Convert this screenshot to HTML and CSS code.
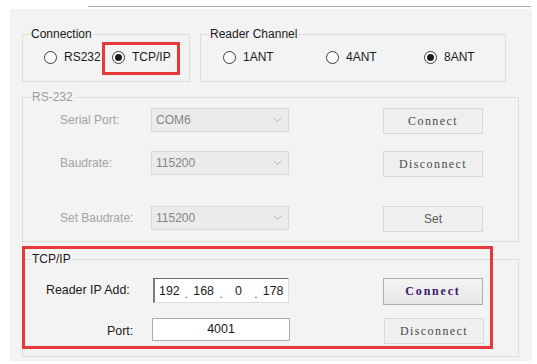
FILE: index.html
```html
<!DOCTYPE html>
<html>
<head>
<meta charset="utf-8">
<link rel="stylesheet" href="styles.css">
</head>
<body>
<div class="topline"></div>
<div class="panel">
  <div class="row1">
    <fieldset class="grp conn">
      <legend>Connection</legend>
      <div class="radios">
        <label class="opt w-rs"><span class="radio"></span>RS232</label>
        <label class="opt"><span class="radio on"></span>TCP/IP</label>
      </div>
    </fieldset>
    <fieldset class="grp chan">
      <legend>Reader Channel</legend>
      <div class="radios">
        <label class="opt w-1"><span class="radio"></span>1ANT</label>
        <label class="opt w-4"><span class="radio"></span>4ANT</label>
        <label class="opt"><span class="radio on"></span>8ANT</label>
      </div>
    </fieldset>
  </div>

  <fieldset class="grp rs disabled">
    <legend>RS-232</legend>
    <div class="frow r1">
      <span class="flabel">Serial Port:</span>
      <div class="combo"><span>COM6</span><svg width="9" height="6" viewBox="0 0 9 6"><path d="M1 1 L4.5 4.5 L8 1" fill="none" stroke="#b4b4b4" stroke-width="1"/></svg></div>
      <button class="btn dis">Connect</button>
    </div>
    <div class="frow r2">
      <span class="flabel">Baudrate:</span>
      <div class="combo"><span>115200</span><svg width="9" height="6" viewBox="0 0 9 6"><path d="M1 1 L4.5 4.5 L8 1" fill="none" stroke="#b4b4b4" stroke-width="1"/></svg></div>
      <button class="btn dis">Disconnect</button>
    </div>
    <div class="frow r3">
      <span class="flabel">Set Baudrate:</span>
      <div class="combo"><span>115200</span><svg width="9" height="6" viewBox="0 0 9 6"><path d="M1 1 L4.5 4.5 L8 1" fill="none" stroke="#b4b4b4" stroke-width="1"/></svg></div>
      <button class="btn dis sans">Set</button>
    </div>
  </fieldset>

  <fieldset class="grp tcp">
    <legend>TCP/IP</legend>
    <div class="frow t1">
      <span class="tlabel ip-l">Reader IP Add:</span>
      <div class="ipbox">
        <span class="oct">192</span><span class="dot">.</span>
        <span class="oct">168</span><span class="dot">.</span>
        <span class="oct">0</span><span class="dot">.</span>
        <span class="oct">178</span>
      </div>
      <button class="btn bold">Connect</button>
    </div>
    <div class="frow t2">
      <span class="tlabel port-l">Port:</span>
      <div class="portbox">4001</div>
      <button class="btn dis">Disconnect</button>
    </div>
  </fieldset>

  <div class="mark mark-tcp"></div>
  <div class="mark mark-grp"></div>
</div>
</body>
</html>
```

FILE: styles.css
```css
* { box-sizing: border-box; }
html, body { margin: 0; padding: 0; background: #ffffff; }
body {
  font-family: "Liberation Sans", Arial, sans-serif;
  font-size: 12px;
  color: #1a1a1a;
  width: 537px;
  height: 364px;
  overflow: hidden;
}
.topline {
  margin: 6px 0 0 88px;
  width: 443px;
  height: 1px;
  background: #a9a9a9;
}
.panel {
  position: relative;
  margin: 2px 0 0 10px;
  width: 522px;
  height: 352px;
  background: #f3f3f3;
  padding: 18px 0 0 12px;
}
.row1 { display: flex; gap: 10px; }
.grp {
  margin: 0;
  padding: 0;
  border: 1px solid #dcdcdc;
  min-width: 0;
}
.grp legend {
  margin-left: 8px;
  padding: 0 1px;
  line-height: 14px;
  font-size: 12px;
}
.conn legend { margin-left: 7px; }
.conn { width: 168px; height: 55px; }
.chan { width: 306px; height: 55px; }
.radios {
  display: flex;
  align-items: center;
  height: 14px;
  margin-top: 9px;
}
.conn .radios { padding-left: 21px; }
.chan .radios { padding-left: 22px; }
.opt { display: flex; align-items: center; line-height: 14px; }
.w-rs { width: 68px; }
.w-1 { width: 103px; }
.w-4 { width: 98px; }
.radio {
  width: 13px;
  height: 13px;
  border: 1px solid #3a3a3a;
  border-radius: 50%;
  background: #fff;
  margin-right: 7px;
  display: flex;
  align-items: center;
  justify-content: center;
}
.radio.on::after {
  content: "";
  width: 7px;
  height: 7px;
  border-radius: 50%;
  background: #1e1e1e;
}

.rs { width: 497px; height: 152px; margin-top: 8px; }
.rs legend { color: #9c9c9c; }
.frow { display: flex; align-items: flex-start; }
.r1 { margin-top: 4px; }
.r2 { margin-top: 17px; }
.r3 { margin-top: 29px; }
.flabel {
  width: 128px;
  padding-left: 37px;
  padding-top: 5px;
  line-height: 14px;
  color: #a3a3a3;
}
.combo {
  width: 138px;
  height: 24px;
  background: #ebebeb;
  border: 1px solid #d9d9d9;
  display: flex;
  align-items: center;
  justify-content: space-between;
  padding: 0 6px 0 4px;
  color: #858585;
}
.btn {
  margin: 0 0 0 94px;
  width: 100px;
  height: 26px;
  padding: 0;
  background: #efefef;
  border: 1px solid #d8d8d8;
  font-family: "Liberation Serif", "Times New Roman", serif;
  font-size: 12px;
  letter-spacing: 1.4px;
  color: #4a4a4a;
}
.btn.sans {
  font-family: "Liberation Sans", Arial, sans-serif;
  font-size: 12px;
  letter-spacing: 0;
  color: #5a5a5a;
}
.btn.bold {
  height: 27px;
  background: linear-gradient(#f4f4f4, #e7e7e7);
  border: 1px solid #adadad;
  font-weight: bold;
  font-size: 12px;
  letter-spacing: 1.8px;
  color: #3e1675;
}

.tcp { width: 497px; height: 105px; margin-top: 10px; }
.t1 { margin-top: 12px; }
.t2 { margin-top: 13px; }
.tlabel { line-height: 24px; color: #1a1a1a; font-size: 12.4px; }
.ip-l { width: 130px; padding-left: 23px; }
.port-l { width: 129px; padding-left: 84px; line-height: 26px; }
.ipbox {
  width: 136px;
  height: 25px;
  background: #fff;
  border-top: 1px solid #6d6d6d;
  border-left: 2px solid #7a7a7a;
  border-right: 1px solid #dcdcdc;
  border-bottom: 1px solid #dcdcdc;
  display: flex;
  align-items: center;
  font-size: 12.4px;
}
.oct { width: 30px; text-align: center; }
.oct:first-child { width: 29px; }
.dot { width: 5px; text-align: center; line-height: 1; padding-top: 8px; font-size: 10px; }
.portbox {
  width: 138px;
  height: 23px;
  background: #fff;
  border: 1px solid #ababab;
  text-align: center;
  line-height: 21px;
  font-size: 12.4px;
}
.t2 .btn { margin-left: 94px; height: 26px; }

.mark {
  position: absolute;
  border: 3px solid #e5393b;
}
.mark-tcp { left: 92px; top: 33px; width: 78px; height: 33px; }
.mark-grp { left: 12px; top: 237px; width: 471px; height: 103px; }
```
